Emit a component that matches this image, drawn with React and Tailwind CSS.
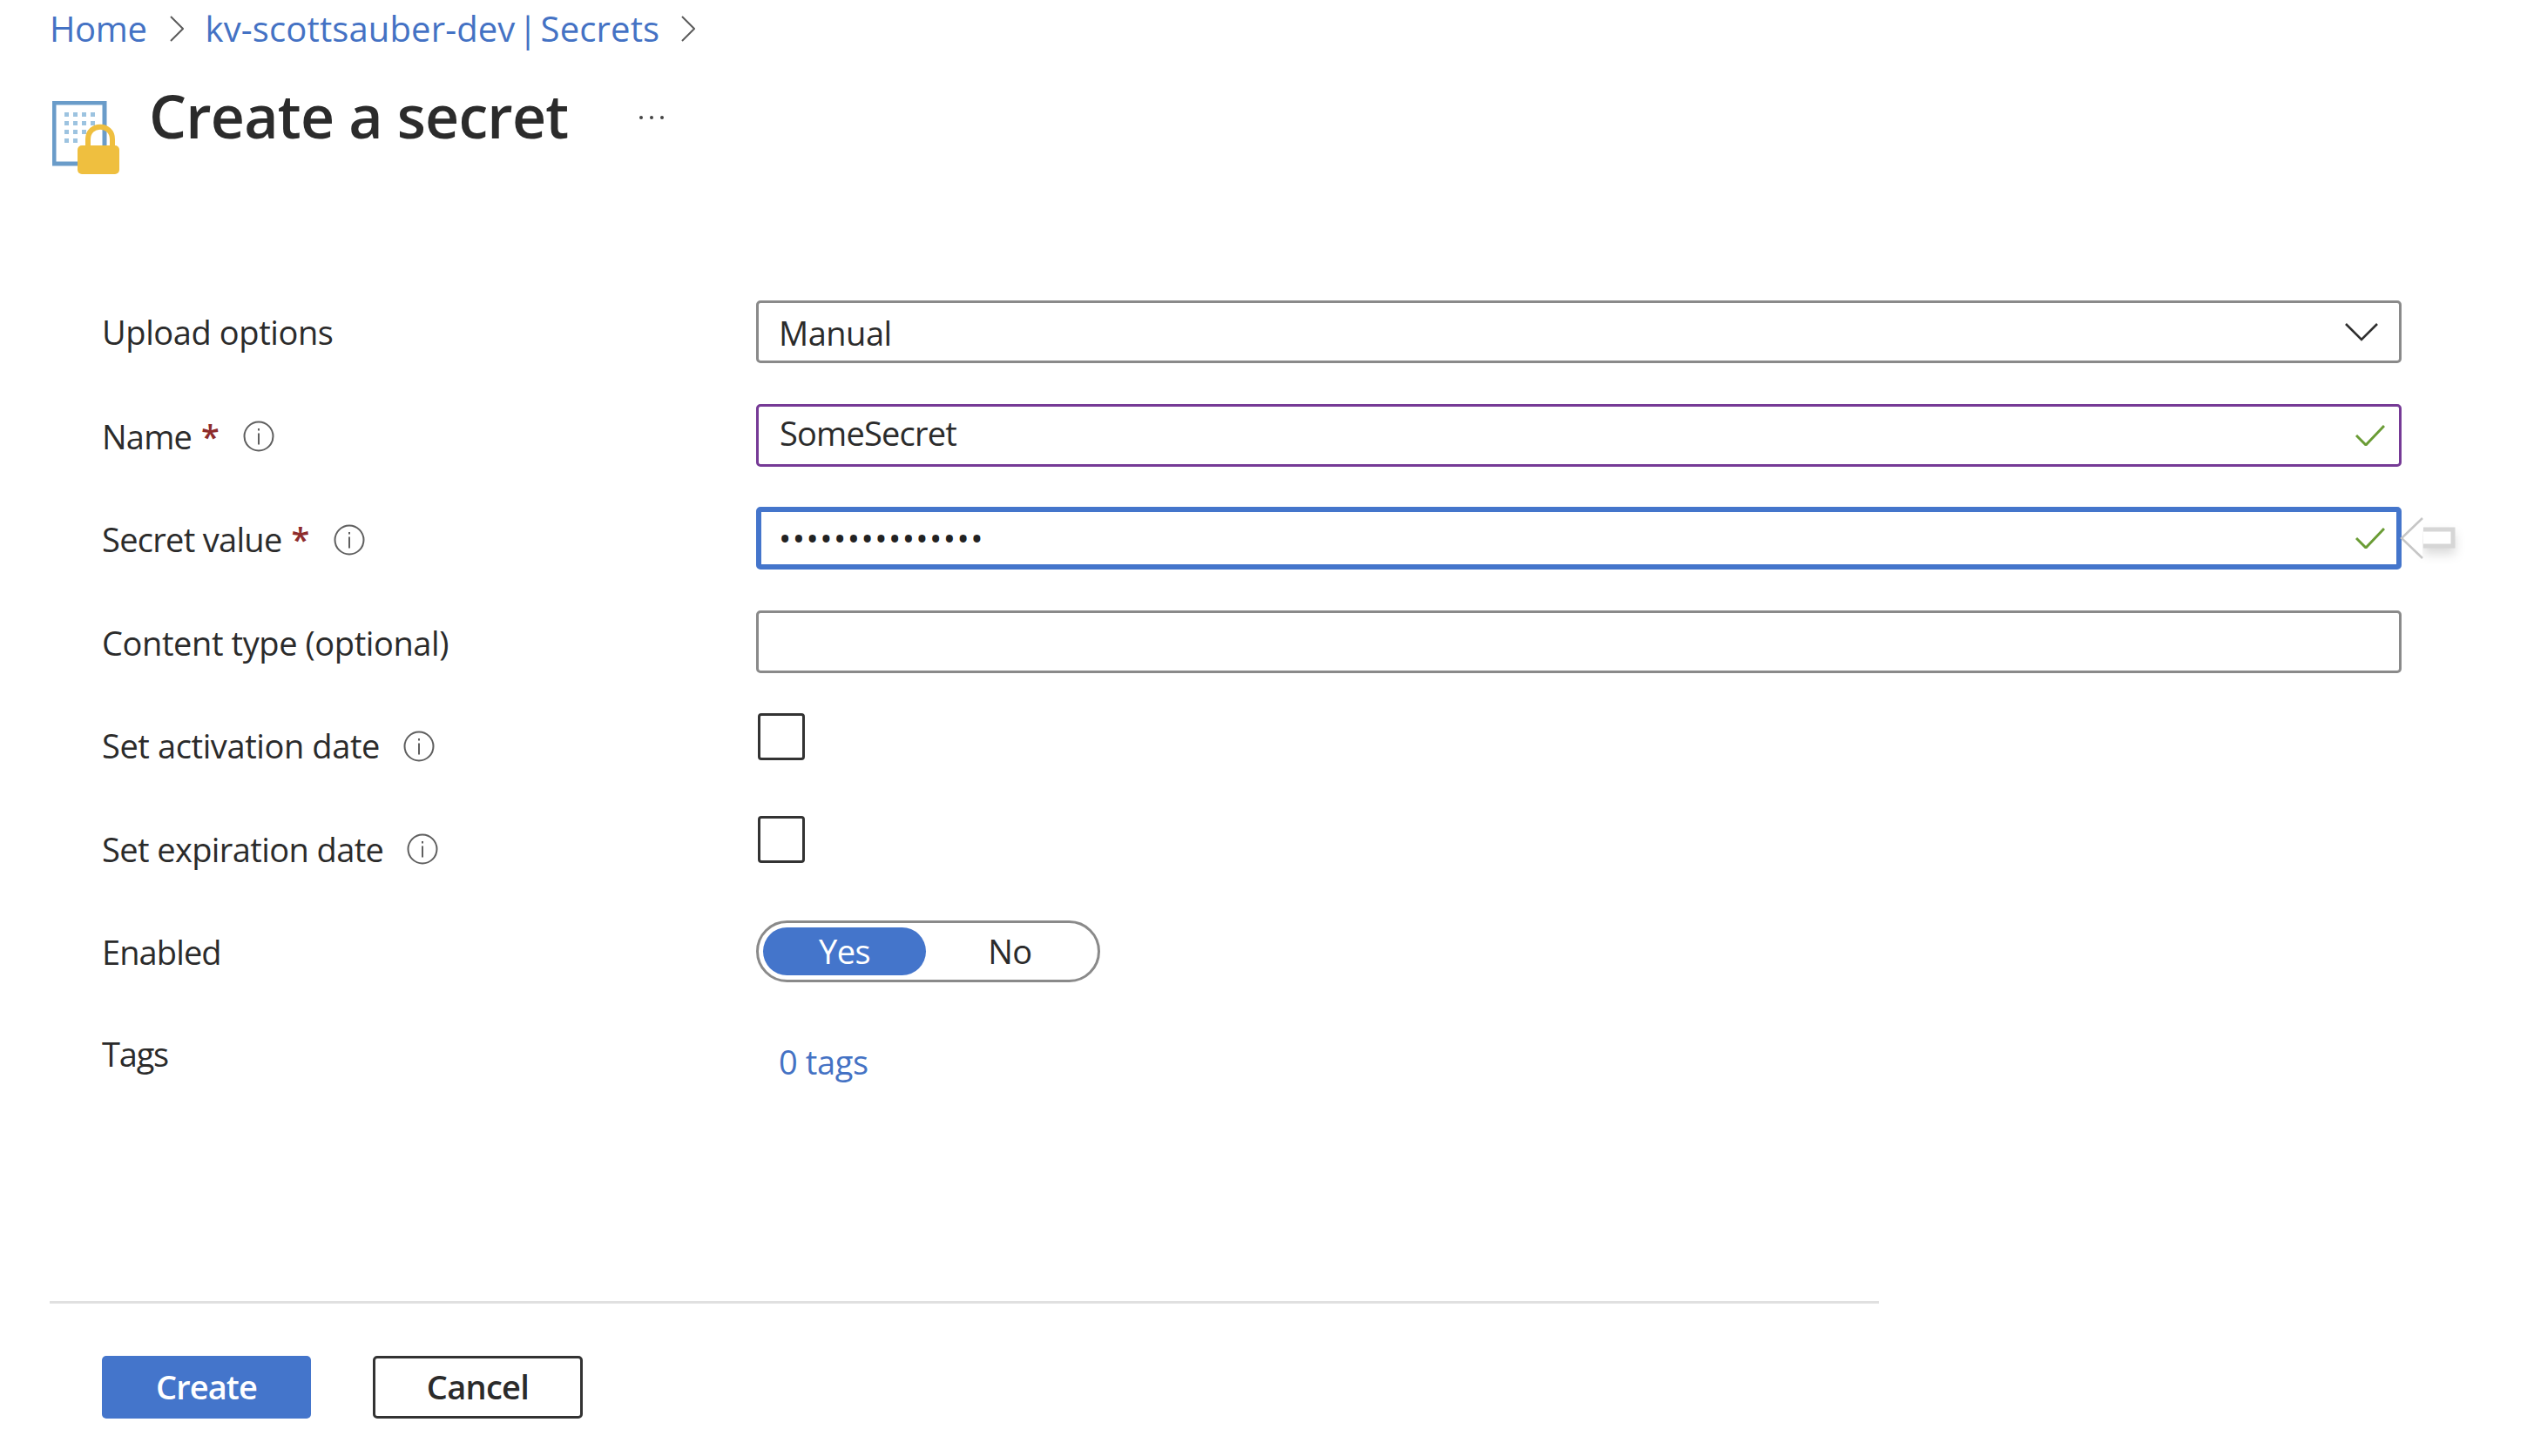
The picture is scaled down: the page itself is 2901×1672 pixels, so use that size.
const InfoIcon = () => (
  <svg viewBox="0 0 36 36" className="w-[36px] h-[36px] shrink-0" fill="none">
    <circle cx="18" cy="18" r="16.5" stroke="#5f5f5f" strokeWidth="2" />
    <rect x="17" y="9" width="2" height="2.5" fill="#5f5f5f" />
    <rect x="17" y="14.5" width="2" height="13" fill="#5f5f5f" />
  </svg>
);

const Check = () => (
  <svg viewBox="0 0 34 24" className="w-[34px] h-[24px] shrink-0" fill="none">
    <path d="M1 12 L12 23 L33 1" stroke="#6a9c35" strokeWidth="3" />
  </svg>
);

const Crumb = () => (
  <svg viewBox="0 0 16 30" className="w-[16px] h-[30px] shrink-0" fill="none">
    <path d="M1 1 L15 15 L1 29" stroke="#5c5c5c" strokeWidth="2" />
  </svg>
);

const Required = () => (
  <span className="text-[#8e2c2c] font-semibold ml-[11px]">*</span>
);

const Field = ({ border, children }) => (
  <div
    className={`h-[72px] w-[1889px] box-border rounded-[5px] flex items-center justify-between pl-[24px] pr-[16px] ${border}`}
  >
    {children}
  </div>
);

const Row = ({ label, labelPad = "", children }) => (
  <div className="flex h-[72px]">
    <div
      className={`w-[751px] shrink-0 flex items-center text-[38px] tracking-[-0.4px] text-[#2b2b2b] ${labelPad}`}
    >
      {label}
    </div>
    {children}
  </div>
);

const Checkbox = () => (
  <div className="w-[54px] h-[54px] ml-[2px] border-[3px] border-[#333333] rounded-[4px] box-border -translate-y-[1px]"></div>
);

const App = () => {
  return (
    <div
      className="w-[2901px] h-[1672px] overflow-hidden bg-white px-[57px] relative text-[#2b2b2b]"
      style={{ fontFamily: '"Open Sans", "Noto Sans", sans-serif' }}
    >
      {/* breadcrumb */}
      <div className="flex items-center h-[66px] text-[40px] text-[#4472c4]">
        <span className="tracking-[-0.37px]">Home</span>
        <div className="ml-[26px]">
          <Crumb />
        </div>
        <span className="ml-[25px] tracking-[0.13px] [word-spacing:-7px]">kv-scottsauber-dev | Secrets</span>
        <div className="ml-[25px]">
          <Crumb />
        </div>
      </div>

      {/* title */}
      <div className="flex h-[84px] mt-[50px]">
        <svg viewBox="0 0 78 84" className="w-[78px] h-[84px] ml-[3px] shrink-0" fill="none">
          <rect x="2" y="2" width="58" height="70" fill="#ffffff" stroke="#6a9cc9" strokeWidth="5" />
          <g fill="#9cc3e0">
            <rect x="14" y="13" width="5" height="5" />
            <rect x="24" y="13" width="5" height="5" />
            <rect x="34" y="13" width="5" height="5" />
            <rect x="44" y="13" width="5" height="5" />
            <rect x="14" y="23" width="5" height="5" />
            <rect x="24" y="23" width="5" height="5" />
            <rect x="34" y="23" width="5" height="5" />
            <rect x="44" y="23" width="5" height="5" />
            <rect x="14" y="33" width="5" height="5" />
            <rect x="24" y="33" width="5" height="5" />
            <rect x="34" y="33" width="5" height="5" />
            <rect x="14" y="43" width="5" height="5" />
            <rect x="24" y="43" width="5" height="5" />
          </g>
          <path
            d="M41 54 V44 C41 25 69 25 69 44 V54"
            stroke="#efbf3f"
            strokeWidth="6"
            fill="none"
          />
          <rect x="29" y="51" width="48" height="33" rx="5" fill="#efbf3f" />
        </svg>
        <div className="ml-[33px] -mt-[25px] text-[68px] leading-[84px] font-semibold tracking-[-0.8px] text-[#2b2b2b] whitespace-nowrap">
          Create a secret
        </div>
        <div className="ml-[82px] mt-[2px] flex gap-[8px] h-[8px] items-center translate-y-[13px]">
          <span className="w-[4px] h-[4px] rounded-full bg-[#444444]"></span>
          <span className="w-[4px] h-[4px] rounded-full bg-[#444444]"></span>
          <span className="w-[4px] h-[4px] rounded-full bg-[#444444]"></span>
        </div>
      </div>

      {/* form */}
      <div className="mt-[145px] ml-[60px] flex flex-col gap-y-[46.7px]">
        <Row label="Upload options">
          <Field border="border-[3px] border-[#8a8a8a]">
            <span className="text-[38px] tracking-[-0.5px] translate-y-[1px] -ml-[1px]">Manual</span>
            <svg viewBox="0 0 38 21" className="w-[38px] h-[21px] mr-[8px]" fill="none">
              <path d="M1 1 L19 19 L37 1" stroke="#2f2f2f" strokeWidth="2.6" />
            </svg>
          </Field>
        </Row>

        <Row
          labelPad="pt-[3px]"
          label={
            <>
              <span className="tracking-[-0.8px]">Name</span>
              <Required />
              <span className="ml-[28px] flex">
                <InfoIcon />
              </span>
            </>
          }
        >
          <Field border="border-[3px] border-[#763a96]">
            <span className="text-[38px] tracking-[-0.8px] -translate-y-[2px]">SomeSecret</span>
            <Check />
          </Field>
        </Row>

        <Row
          labelPad="pt-[3px]"
          label={
            <>
              <span className="tracking-[-0.7px]">Secret value</span>
              <Required />
              <span className="ml-[28px] flex">
                <InfoIcon />
              </span>
            </>
          }
        >
          <div className="relative">
            <Field border="border-[6px] border-[#4475cb]">
              <span className="text-[38px] tracking-[1.45px] text-[#222222] -ml-[4px]">•••••••••••••••</span>
              <span className="-mr-[3px] flex">
                <Check />
              </span>
            </Field>
            {/* annotation arrow on top of the field edge */}
            <svg
              viewBox="0 0 70 60"
              className="absolute left-[1886px] top-[10px] w-[70px] h-[60px] overflow-visible"
              fill="none"
            >
              <path
                d="M28 16 H62 V35 H28"
                fill="#ffffff"
                stroke="#d6d6d6"
                strokeWidth="5"
                className="drop-shadow-[0_7px_6px_rgba(0,0,0,0.14)]"
              />
              <path d="M27 3 L3 26 L27 49 Z" fill="#ffffff" />
              <path d="M27 3 L3 26 L27 49" stroke="#c6c6c6" strokeWidth="2.5" />
            </svg>
          </div>
        </Row>

        <Row labelPad="pt-[2px]" label="Content type (optional)">
          <Field border="border-[3px] border-[#8a8a8a]"></Field>
        </Row>

        <Row
          labelPad="pt-[2px]"
          label={
            <>
              Set activation date
              <span className="ml-[27px] flex">
                <InfoIcon />
              </span>
            </>
          }
        >
          <Checkbox />
        </Row>

        <Row
          labelPad="pt-[2px]"
          label={
            <>
              <span className="tracking-[-0.6px]">Set expiration date</span>
              <span className="ml-[27px] flex">
                <InfoIcon />
              </span>
            </>
          }
        >
          <Checkbox />
        </Row>

        <Row label={<span className="tracking-[-0.9px]">Enabled</span>}>
          <div className="w-[395px] h-[71px] box-border rounded-full border-[3px] border-[#8a8a8a] flex items-center pl-[5px] text-[38px] tracking-[-0.5px]">
            <div className="w-[187px] h-[55px] rounded-full bg-[#4475cb] text-white flex items-center justify-center">
              Yes
            </div>
            <div className="flex-1 flex items-center justify-center pr-[4px]">No</div>
          </div>
        </Row>

        <Row labelPad="-translate-y-[1px]" label={<span className="tracking-[-1.2px]">Tags</span>}>
          <div className="pl-[26px] flex items-center text-[38px] tracking-[-0.4px] text-[#4472c4] translate-y-[8px]">
            0 tags
          </div>
        </Row>
      </div>

      {/* footer */}
      <div className="mt-[246px] w-[2100px] h-[3px] bg-[#e0e0e0]"></div>
      <div className="mt-[60px] ml-[60px] flex gap-x-[71px]">
        <button className="w-[240px] h-[72px] rounded-[5px] bg-[#4475cb] text-white text-[38px] font-semibold tracking-[-0.9px]">
          Create
        </button>
        <button className="w-[241px] h-[72px] rounded-[5px] border-[3px] border-[#333333] box-border text-[#2b2b2b] text-[38px] font-semibold tracking-[-0.7px]">
          Cancel
        </button>
      </div>
    </div>
  );
};

export default App;
